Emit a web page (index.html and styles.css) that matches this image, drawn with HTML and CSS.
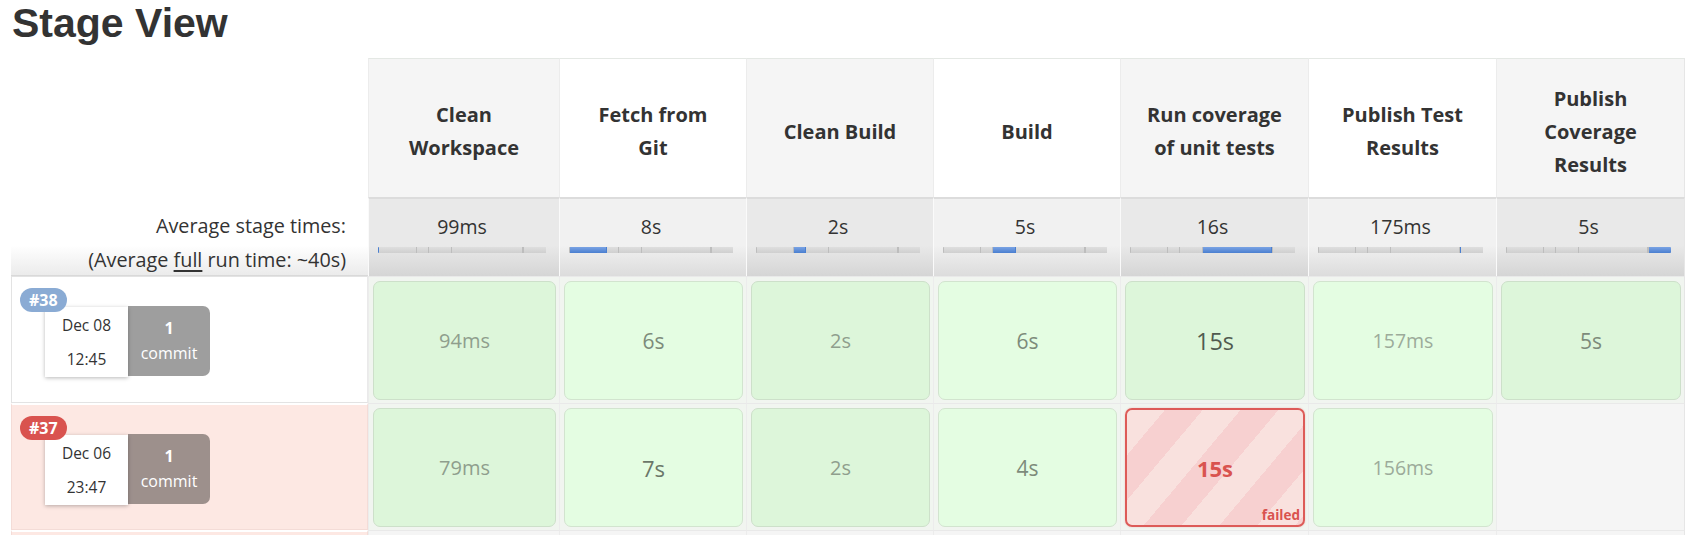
FILE: index.html
```html
<!DOCTYPE html>
<html lang="en">
<head>
<meta charset="utf-8">
<title>Stage View</title>
<link rel="stylesheet" href="styles.css">
</head>
<body>
<h2 class="title">Stage View</h2>
<div class="stage-view">
  <div class="corner"></div>
  <div class="stage-head odd"><span>Clean<br>Workspace</span></div>
  <div class="stage-head"><span>Fetch from<br>Git</span></div>
  <div class="stage-head odd"><span>Clean Build</span></div>
  <div class="stage-head"><span>Build</span></div>
  <div class="stage-head odd"><span>Run coverage<br>of unit tests</span></div>
  <div class="stage-head"><span>Publish Test<br>Results</span></div>
  <div class="stage-head odd last"><span>Publish<br>Coverage<br>Results</span></div>

  <div class="avg-label">Average stage times:<br>(Average <u>full</u> run time: ~40s)</div>
  <div class="avg odd">
    <div class="avg-time">99ms</div>
    <div class="track"><i class="seg on" style="width:0.6%"></i><i class="seg" style="width:22.7%"></i><i class="seg" style="width:7%"></i><i class="seg" style="width:14%"></i><i class="seg" style="width:42%"></i><i class="seg" style="width:0.6%"></i><i class="seg" style="width:13.1%"></i></div>
  </div>
  <div class="avg">
    <div class="avg-time">8s</div>
    <div class="track"><i class="seg" style="width:0.6%"></i><i class="seg on" style="width:22.7%"></i><i class="seg" style="width:7%"></i><i class="seg" style="width:14%"></i><i class="seg" style="width:42%"></i><i class="seg" style="width:0.6%"></i><i class="seg" style="width:13.1%"></i></div>
  </div>
  <div class="avg odd">
    <div class="avg-time">2s</div>
    <div class="track"><i class="seg" style="width:0.6%"></i><i class="seg" style="width:22.7%"></i><i class="seg on" style="width:7%"></i><i class="seg" style="width:14%"></i><i class="seg" style="width:42%"></i><i class="seg" style="width:0.6%"></i><i class="seg" style="width:13.1%"></i></div>
  </div>
  <div class="avg">
    <div class="avg-time">5s</div>
    <div class="track"><i class="seg" style="width:0.6%"></i><i class="seg" style="width:22.7%"></i><i class="seg" style="width:7%"></i><i class="seg on" style="width:14%"></i><i class="seg" style="width:42%"></i><i class="seg" style="width:0.6%"></i><i class="seg" style="width:13.1%"></i></div>
  </div>
  <div class="avg odd">
    <div class="avg-time">16s</div>
    <div class="track"><i class="seg" style="width:0.6%"></i><i class="seg" style="width:22.7%"></i><i class="seg" style="width:7%"></i><i class="seg" style="width:14%"></i><i class="seg on" style="width:42%"></i><i class="seg" style="width:0.6%"></i><i class="seg" style="width:13.1%"></i></div>
  </div>
  <div class="avg">
    <div class="avg-time">175ms</div>
    <div class="track"><i class="seg" style="width:0.6%"></i><i class="seg" style="width:22.7%"></i><i class="seg" style="width:7%"></i><i class="seg" style="width:14%"></i><i class="seg" style="width:42%"></i><i class="seg on" style="width:0.6%"></i><i class="seg" style="width:13.1%"></i></div>
  </div>
  <div class="avg odd last">
    <div class="avg-time">5s</div>
    <div class="track"><i class="seg" style="width:0.6%"></i><i class="seg" style="width:22.7%"></i><i class="seg" style="width:7%"></i><i class="seg" style="width:14%"></i><i class="seg" style="width:42%"></i><i class="seg" style="width:0.6%"></i><i class="seg on" style="width:13.1%"></i></div>
  </div>

  <div class="build">
    <span class="badge">#38</span>
    <div class="run">
      <div class="date"><div>Dec 08</div><div>12:45</div></div>
      <div class="commits"><b>1</b><span>commit</span></div>
    </div>
  </div>
  <div class="cell odd"><div class="box t-light">94ms</div></div>
  <div class="cell"><div class="box t-mid">6s</div></div>
  <div class="cell odd"><div class="box t-light">2s</div></div>
  <div class="cell"><div class="box t-mid">6s</div></div>
  <div class="cell odd"><div class="box t-dark">15s</div></div>
  <div class="cell"><div class="box t-pale">157ms</div></div>
  <div class="cell odd last"><div class="box t-mid">5s</div></div>

  <div class="build failed-run">
    <span class="badge red">#37</span>
    <div class="run">
      <div class="date"><div>Dec 06</div><div>23:47</div></div>
      <div class="commits"><b>1</b><span>commit</span></div>
    </div>
  </div>
  <div class="cell odd"><div class="box t-light">79ms</div></div>
  <div class="cell"><div class="box t-dark2">7s</div></div>
  <div class="cell odd"><div class="box t-light">2s</div></div>
  <div class="cell"><div class="box t-mid">4s</div></div>
  <div class="cell odd"><div class="box failed">15s<span class="failed-label">failed</span></div></div>
  <div class="cell"><div class="box t-pale">156ms</div></div>
  <div class="cell empty last"></div>

  <div class="build failed-run"></div>
  <div class="cell empty"></div>
  <div class="cell empty"></div>
  <div class="cell empty"></div>
  <div class="cell empty"></div>
  <div class="cell empty"></div>
  <div class="cell empty"></div>
  <div class="cell empty last"></div>
</div>
</body>
</html>
```

FILE: styles.css
```css
* {
  box-sizing: border-box;
}

body {
  margin: 0;
  padding: 0 8px 0 11px;
  font-family: "Open Sans", "Noto Sans", sans-serif;
  color: #333;
  background: #fff;
}

.title {
  margin: 0 0 12px 1px;
  font-family: "Liberation Sans", Arial, sans-serif;
  font-size: 41px;
  line-height: 46px;
  font-weight: 700;
  color: #333;
}

.stage-view {
  display: grid;
  grid-template-columns: 357px 191px 187px 187px 187px 188px 188px 189px;
  grid-template-rows: 139px 79px 127px 127px 16px;
}

.corner {
  background: #fff;
}

.stage-head {
  display: flex;
  align-items: center;
  justify-content: center;
  text-align: center;
  font-weight: 700;
  font-size: 20px;
  line-height: 33px;
  padding-top: 6px;
  background: #fff;
  border-top: 1px solid #e4e8e4;
  border-left: 1px solid #ececec;
}

.stage-head.odd {
  background: #f5f5f5;
}

.stage-head.last,
.avg.last,
.cell.last {
  border-right: 1px solid #e6e6e6;
}

.avg-label {
  text-align: right;
  font-size: 19.8px;
  line-height: 34px;
  padding: 12px 22px 0 0;
  background: linear-gradient(#fff 62%, #ebebeb 100%);
  border-bottom: 1px solid #d9d9d9;
}

.avg-label u {
  text-decoration-thickness: 2px;
  text-underline-offset: 3px;
}

.avg {
  padding: 16px 13px 0 9px;
  text-align: center;
  background: linear-gradient(#f1f1f1 0%, #f1f1f1 60%, #dcdcdc 100%);
  border-top: 2px solid #dcdcdc;
  border-left: 1px solid #fafafa;
}

.avg.odd {
  background: linear-gradient(#e9e9e9 0%, #e9e9e9 60%, #d5d5d5 100%);
}

.avg-time {
  font-size: 19.5px;
  line-height: 24px;
  color: #333;
}

.track {
  display: flex;
  height: 6px;
  margin-top: 8px;
  background: linear-gradient(#dcdcdc, #cdcdcd);
  border-radius: 1px;
  overflow: hidden;
}

.seg {
  display: block;
  height: 100%;
  border-right: 1px solid #bdbdbd;
  background: linear-gradient(#dedede, #cfcfcf);
}

.seg:last-child {
  border-right: 0;
}

.seg.on {
  background: linear-gradient(#7aa3e4, #4a7fd0);
  border-right-color: #4a7fd0;
  min-width: 1px;
}

.build {
  position: relative;
  padding: 30px 0 0 33px;
  border: 1px solid #e3e3e3;
  border-right-color: #eaeaea;
  background: #fff;
}

.build.failed-run {
  background: #fde8e3;
  border-color: #f4dcd7;
  border-top: 2px solid #fff;
}

.badge {
  position: absolute;
  left: 8px;
  top: 11px;
  z-index: 1;
  height: 24px;
  padding: 0 9px;
  border-radius: 12px;
  background: #8aabd4;
  color: #fff;
  font-weight: 700;
  font-size: 16px;
  line-height: 24px;
}

.badge.red {
  background: #d9534f;
}

.run {
  display: flex;
  align-items: flex-start;
}

.date {
  width: 83px;
  height: 70px;
  padding-top: 1px;
  background: #fff;
  box-shadow: 0 1px 4px rgba(0, 0, 0, 0.28);
  text-align: center;
  font-size: 15.5px;
  line-height: 34px;
  color: #333;
}

.commits {
  width: 82px;
  height: 70px;
  margin-top: -1px;
  display: flex;
  flex-direction: column;
  align-items: center;
  justify-content: center;
  background: rgba(0, 0, 0, 0.38);
  border-radius: 0 7px 7px 0;
  color: #fff;
  font-size: 16px;
  line-height: 25px;
}

.commits b {
  font-weight: 700;
}

.cell {
  padding: 4px 3px 3px 4px;
  background: #f1f5f0;
  border-left: 1px solid #ececec;
  border-top: 1px solid #e9e9e9;
}

.cell.empty {
  background: #f5f5f5;
}

.box {
  height: 100%;
  display: flex;
  align-items: center;
  justify-content: center;
  border-radius: 7px;
  border: 1px solid #d2e4cf;
  background: #e4fde2;
  font-size: 20px;
  color: #8c9b8a;
}

.cell.odd .box {
  background: #ddf6da;
  border-color: #cde0ca;
}

.box.t-pale {
  color: #9cab9a;
  font-size: 19.5px;
}

.box.t-light {
  color: #8f9e8d;
}

.box.t-mid {
  color: #7d8b7b;
  font-size: 21px;
}

.box.t-dark2 {
  color: #6b7769;
  font-size: 22px;
}

.box.t-dark {
  color: #505a4f;
  font-size: 23.5px;
}

.cell.odd .box.failed,
.box.failed {
  position: relative;
  border: 2px solid #dd5b58;
  background: repeating-linear-gradient(130deg, #f9e1de 0 29px, #f7d0d0 29px 58px);
  color: #d9534f;
  font-weight: 700;
  font-size: 22px;
  box-shadow: 0 0 2px rgba(217, 83, 79, 0.3);
}

.failed-label {
  position: absolute;
  right: 3px;
  bottom: 2px;
  font-size: 13.5px;
  line-height: 16px;
  font-weight: 700;
}
```
